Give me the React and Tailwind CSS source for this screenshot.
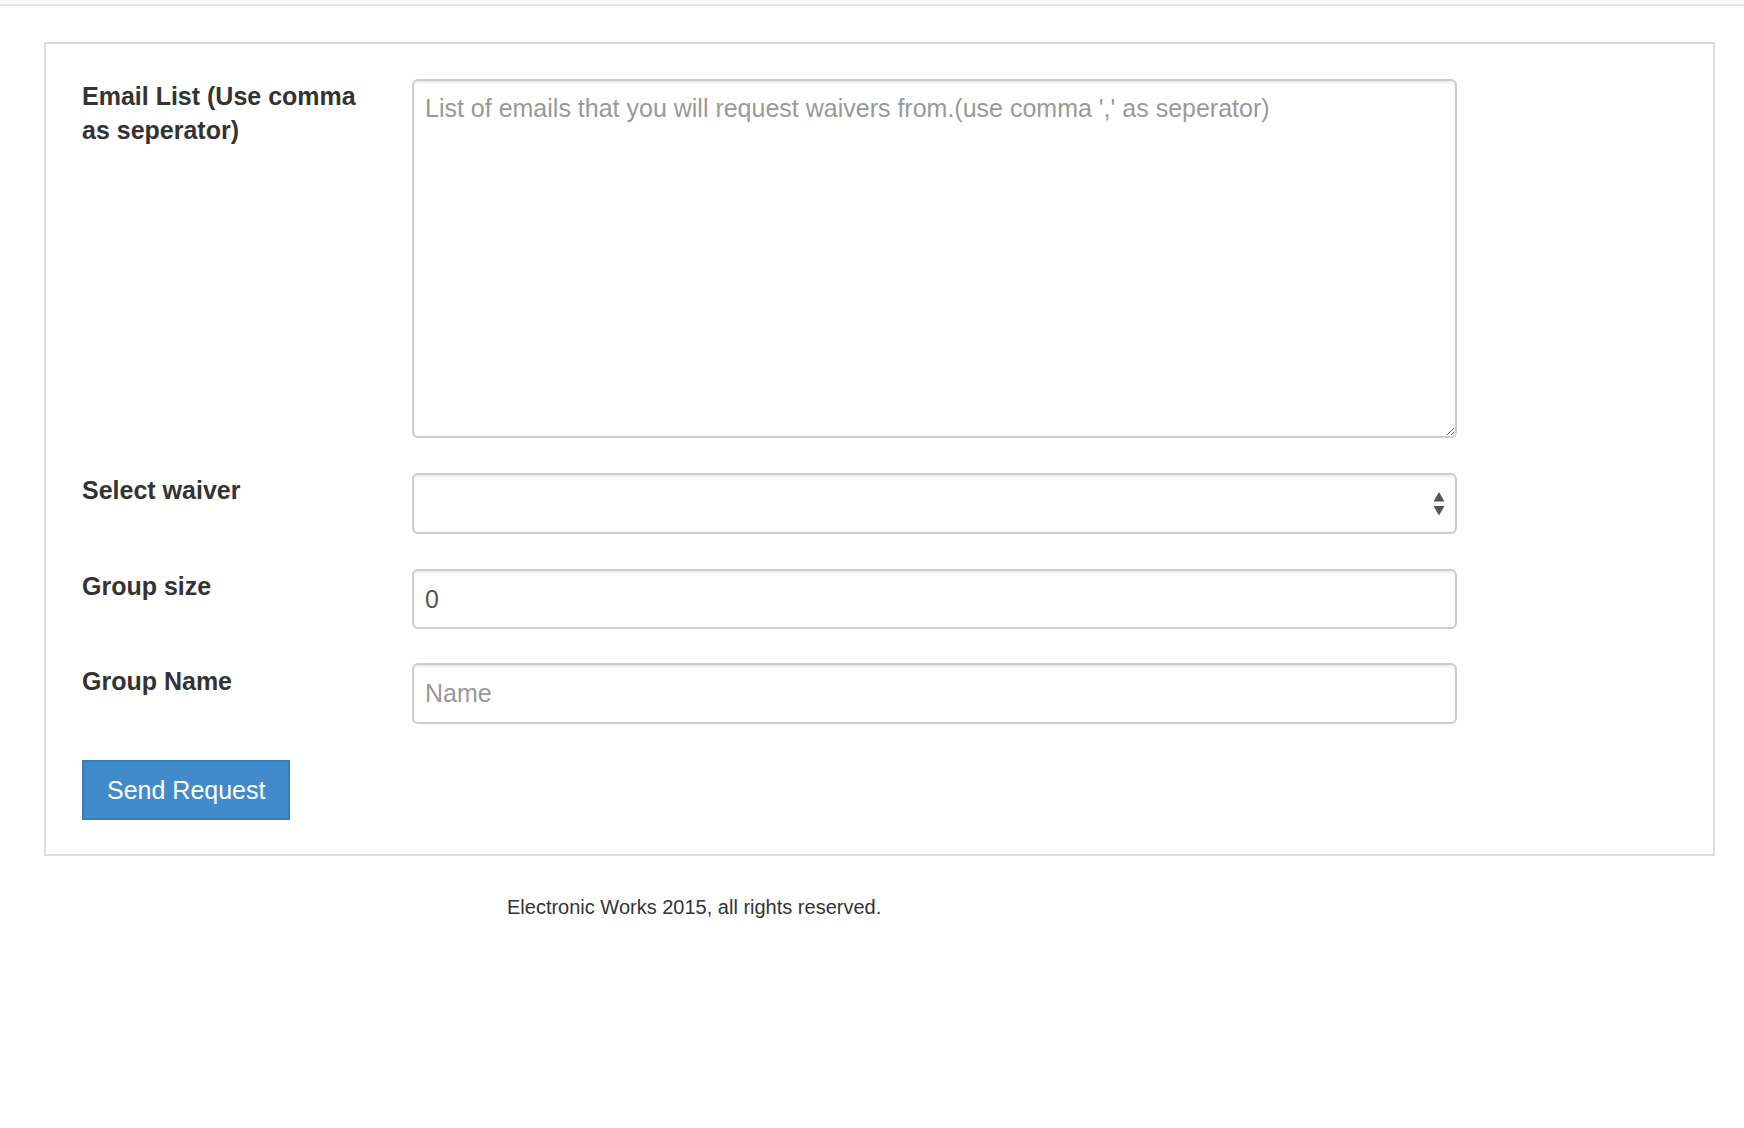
import React from 'react';

const font = "font-['Liberation_Sans','Helvetica_Neue',Arial,sans-serif]";

function FieldLabel({ children }) {
    return (
        <label className="block pr-8 text-[25px] font-bold leading-[34px] text-[#333]">
            {children}
        </label>
    );
}

function SelectArrows() {
    return (
        <svg width="12" height="26" viewBox="0 0 12 26" className="pointer-events-none absolute right-[12px] top-1/2 -translate-y-1/2">
            <path d="M6 1 L11.5 10.5 L0.5 10.5 Z" fill="#555" />
            <path d="M0.5 15 L11.5 15 L6 24.5 Z" fill="#555" />
        </svg>
    );
}

export default function App() {
    const inputBase =
        'w-full rounded-[6px] border-2 border-[#ccc] bg-white px-[11px] text-[25px] text-[#555] placeholder:text-[#999] shadow-[inset_0_2px_2px_rgba(0,0,0,0.075)] outline-none';

    return (
        <div className={`min-h-screen bg-white ${font}`}>
            <div className="h-[6px] border-b-2 border-[#e6e6e6] bg-[#f7f7f7]" />

            <div className="ml-[44px] mr-[29px] mt-[36px] border-2 border-[#ddd] px-[36px] pt-[35px] pb-[34px]">
                <div className="grid grid-cols-[330px_1045px] gap-y-[35px]">
                    <FieldLabel>
                        Email List (Use comma
                        <br />
                        as seperator)
                    </FieldLabel>
                    <textarea
                        className={`${inputBase} h-[359px] pt-[10px] leading-[34px]`}
                        placeholder="List of emails that you will request waivers from.(use comma ',' as seperator)"
                    />

                    <FieldLabel>Select waiver</FieldLabel>
                    <div className="relative">
                        <select className={`${inputBase} h-[61px] appearance-none`} defaultValue="">
                            <option value="" />
                        </select>
                        <SelectArrows />
                    </div>

                    <FieldLabel>Group size</FieldLabel>
                    <input type="text" defaultValue="0" className={`${inputBase} h-[60px]`} />

                    <FieldLabel>Group Name</FieldLabel>
                    <input type="text" placeholder="Name" className={`${inputBase} -mt-px h-[61px]`} />
                </div>

                <button
                    type="button"
                    className="mt-[36px] h-[60px] border-2 border-[#357ebd] bg-[#428bca] px-[23px] text-[25px] leading-none text-white"
                >
                    Send Request
                </button>
            </div>

            <p className="mt-[37px] pl-[507px] text-[20px] leading-[28px] text-[#333]">
                Electronic Works 2015, all rights reserved.
            </p>
        </div>
    );
}
